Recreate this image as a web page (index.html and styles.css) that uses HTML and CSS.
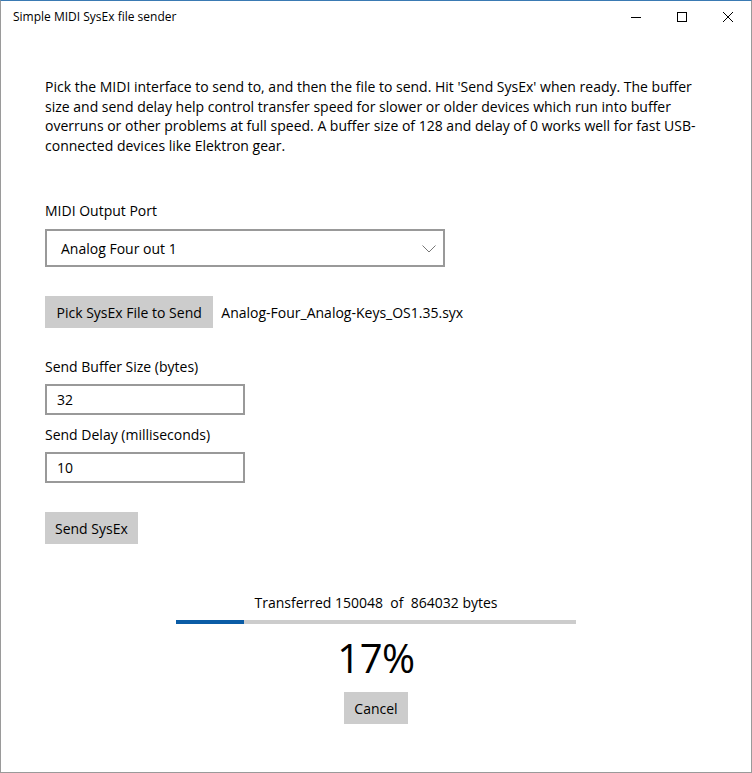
FILE: index.html
```html
<!DOCTYPE html>
<html>
<head>
<meta charset="utf-8">
<link rel="stylesheet" href="styles.css">
</head>
<body>
<div class="window">
  <div class="titlebar">
    <span class="title">Simple MIDI SysEx file sender</span>
    <div class="caption-buttons">
      <span class="cap-btn"><svg width="12" height="12" viewBox="0 0 12 12"><line x1="1" y1="6.5" x2="11" y2="6.5" stroke="#000" stroke-width="1"/></svg></span>
      <span class="cap-btn"><svg width="12" height="12" viewBox="0 0 12 12"><rect x="1.5" y="1.5" width="9" height="9" fill="none" stroke="#000" stroke-width="1"/></svg></span>
      <span class="cap-btn"><svg width="12" height="12" viewBox="0 0 12 12"><path d="M1 1 L11 11 M11 1 L1 11" stroke="#000" stroke-width="1"/></svg></span>
    </div>
  </div>
  <div class="content">
    <p class="intro">Pick the MIDI interface to send to, and then the file to send. Hit 'Send SysEx' when ready. The buffer size and send delay help control transfer speed for slower or older devices which run into buffer overruns or other problems at full speed. A buffer size of 128 and delay of 0 works well for fast USB-connected devices like Elektron gear.</p>

    <div class="label label-port">MIDI Output Port</div>
    <div class="select">
      <span>Analog Four out 1</span>
      <svg class="chevron" width="14" height="8" viewBox="0 0 14 8"><path d="M0.5 0.5 L7 7 L13.5 0.5" fill="none" stroke="#777" stroke-width="1"/></svg>
    </div>

    <div class="file-row">
      <button class="btn btn-pick">Pick SysEx File to Send</button>
      <span class="filename">Analog-Four_Analog-Keys_OS1.35.syx</span>
    </div>

    <div class="label label-buffer">Send Buffer Size (bytes)</div>
    <div class="textbox">32</div>
    <div class="label label-delay">Send Delay (milliseconds)</div>
    <div class="textbox">10</div>

    <div class="send-row"><button class="btn">Send SysEx</button></div>

    <div class="progress-area">
      <div class="transferred">Transferred 150048&nbsp; of&nbsp; 864032 bytes</div>
      <div class="bar"><div class="fill" style="width:17%"></div></div>
      <div class="percent">17%</div>
      <button class="btn">Cancel</button>
    </div>
  </div>
</div>
</body>
</html>
```
FILE: styles.css
```css
* { box-sizing: border-box; }
html, body { margin: 0; padding: 0; background: #fff; }
body {
  width: 752px;
  height: 773px;
  overflow: hidden;
  font-family: "Open Sans", "Noto Sans", sans-serif;
  color: #000;
}
.window {
  width: 752px;
  height: 773px;
  border: 1px solid #9a9a9a;
  border-top: 1px solid #3a7ab3;
  display: flex;
  flex-direction: column;
}
.titlebar {
  height: 31px;
  display: flex;
  align-items: center;
  justify-content: space-between;
  flex-shrink: 0;
}
.title {
  font-size: 12px;
  padding-left: 12px;
  color: #000;
}
.caption-buttons { display: flex; height: 31px; }
.cap-btn {
  width: 46px;
  height: 31px;
  display: flex;
  align-items: center;
  justify-content: center;
}
.content {
  padding: 0 44px;
  display: flex;
  flex-direction: column;
  align-items: flex-start;
  font-size: 14px;
}
.intro {
  margin: 45px 0 0 0;
  line-height: 19.5px;
  width: 663px;
}
.label { line-height: 20px; }
.label-port { margin-top: 46px; }
.select {
  margin-top: 8px;
  width: 400px;
  height: 38px;
  border: 2px solid #999;
  display: flex;
  align-items: center;
  justify-content: space-between;
  padding: 0 7px 0 14px;
}
.chevron { display: block; margin-top: 1px; }
.file-row {
  margin-top: 29px;
  display: flex;
  align-items: center;
  gap: 8px;
}
.btn {
  font: inherit;
  font-size: 14px;
  background: #cccccc;
  border: none;
  color: #000;
  height: 32px;
  padding: 0 10px;
  margin: 0;
}
.btn-pick { padding: 0 11.5px; }
.label-buffer { margin-top: 29px; }
.textbox {
  margin-top: 7px;
  width: 200px;
  height: 31px;
  border: 2px solid #999;
  padding: 0 10px;
  display: flex;
  align-items: center;
}
.label-delay { margin-top: 10px; }
.send-row { margin-top: 29px; }
.progress-area {
  align-self: stretch;
  display: flex;
  flex-direction: column;
  align-items: center;
  margin-top: 49px;
}
.transferred { line-height: 20px; }
.bar {
  margin-top: 7px;
  width: 400px;
  height: 4px;
  background: #cccccc;
}
.fill { height: 4px; background: #0a5ca6; }
.percent {
  margin-top: 9px;
  font-size: 40px;
  line-height: 50px;
  letter-spacing: -0.5px;
  font-weight: 400;
}
.progress-area .btn { margin-top: 9px; }
```
